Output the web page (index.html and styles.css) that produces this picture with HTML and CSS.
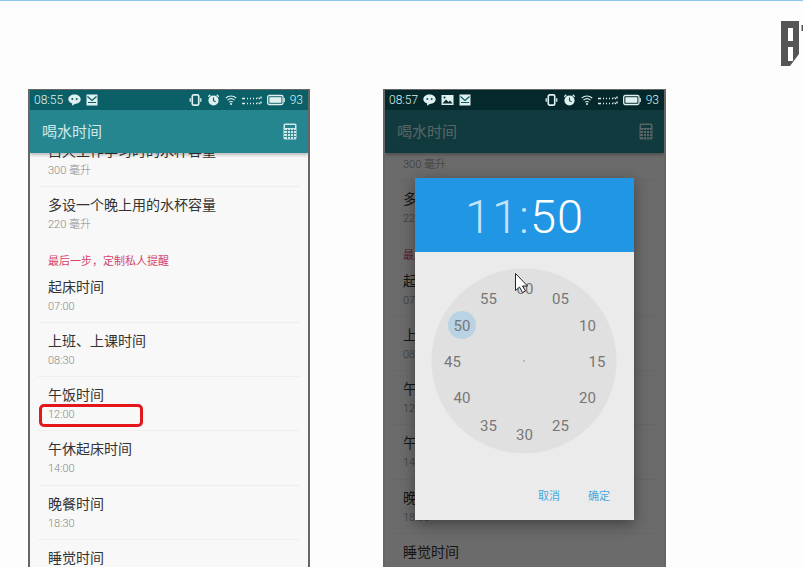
FILE: index.html
```html
<!DOCTYPE html>
<html lang="en">
<head>
    <meta charset="UTF-8">
    <meta name="viewport" content="width=device-width, initial-scale=1.0">
    <title>喝水时间</title>
    <link rel="stylesheet" href="styles.css">
</head>
<body>
    <svg class="defs" width="0" height="0">
        <symbol id="i-chat" viewBox="0 0 13 12"><path d="M6.5 0.5C10 .5 12.7 2.6 12.7 5.3S10 10 6.8 10L4 11.7 4.2 9.5C1.800 8.700.3 7.200.3 5.300.3 2.600 3 .5 6.500.5z" fill="currentColor"/><circle cx="4.300" cy="5" r="1" fill="#0a5a60"/><circle cx="8.700" cy="5" r="1" fill="#0a5a60"/></symbol>
        <symbol id="i-mail" viewBox="0 0 12 12"><rect x=".5" y=".5" width="11" height="11" fill="currentColor"/><path d="M1.500 2.500L6 6.500 10.500 2.500M2 8.500H10" fill="none" stroke="#0a5a60" stroke-width="1.200"/></symbol>
        <symbol id="i-image" viewBox="0 0 13 12"><rect x=".5" y="1" width="12" height="10" fill="currentColor"/><path d="M1.500 9.500L5 5.500 7.500 8 9 6.500 11.500 9.500z" fill="#04282b"/><circle cx="3.500" cy="3.500" r="1" fill="#04282b"/></symbol>
        <symbol id="i-vibrate" viewBox="0 0 13 13"><rect x="3" y="1" width="7" height="11" rx="1.500" fill="none" stroke="currentColor" stroke-width="1.800"/><path d="M.8 4.500V8.500M12.200 4.500V8.500" stroke="currentColor" stroke-width="1.400"/></symbol>
        <symbol id="i-alarm" viewBox="0 0 13 13"><circle cx="6.500" cy="7" r="5.500" fill="currentColor"/><path d="M6.500 3.800V7.300L8.800 8.500" fill="none" stroke="#0a5a60" stroke-width="1.200"/><path d="M.8 3L3 .8M12.200 3L10 .8" stroke="currentColor" stroke-width="1.300"/></symbol>
        <symbol id="i-wifi" viewBox="0 0 12 11"><path d="M.8 3.500C3.800.8 8.200.8 11.200 3.500M2.500 5.600C4.500 3.900 7.500 3.900 9.500 5.600M4.200 7.600C5.300 6.800 6.700 6.800 7.800 7.600" fill="none" stroke="currentColor" stroke-width="1.100"/><circle cx="6" cy="9.500" r="1" fill="currentColor"/></symbol>
        <symbol id="i-signal" viewBox="0 0 20 9"><path d="M0 3H3M0 8H3M5 3H6M5 8H6M8 3H9M8 8H9M11 3H12M11 8H12M14 3H15M14 8H15M17 3H18M17 8H18M19 1V3M19 6V8M16 2V3M16 7V8" stroke="currentColor" stroke-width="1.400" fill="none"/></symbol>
        <symbol id="i-battery" viewBox="0 0 18 11"><rect x=".7" y="1" width="15.300" height="9" rx="1.500" fill="none" stroke="currentColor" stroke-width="1.300"/><rect x="2.400" y="2.700" width="12" height="5.600" fill="currentColor"/><rect x="16.500" y="3.500" width="1.300" height="4" fill="currentColor"/></symbol>
        <symbol id="i-calc" viewBox="0 0 14 17"><rect x=".5" y=".5" width="13" height="16" rx="1.500" fill="currentColor"/><rect x="2" y="2" width="10" height="3" fill="#268690"/><path d="M1 7.500H13M1 10.500H13M1 13.500H13M4.500 6V16M7.500 6V16M10.500 6V16" stroke="#268690" stroke-width=".9" fill="none"/></symbol>
    </svg>

    <svg class="logo" viewBox="0 0 22 45" width="22" height="45">
        <path d="M0 0H18V33L9 45H0z" fill="#555"/>
        <rect x="7" y="7" width="5" height="13" fill="#fff"/>
        <rect x="7" y="26" width="5" height="14" fill="#fff"/>
        <rect x="20.500" y="4" width="1.500" height="6" fill="#555"/>
    </svg>

    <main class="slide">
        <!-- left phone: settings list -->
        <section class="phone">
            <div class="status">
                <div class="status-group">
                    <span class="clock-time">08:55</span>
                    <svg class="ic ic-13"><use href="#i-chat"/></svg>
                    <svg class="ic ic-12"><use href="#i-mail"/></svg>
                </div>
                <div class="status-group">
                    <svg class="ic ic-13"><use href="#i-vibrate"/></svg>
                    <svg class="ic ic-13"><use href="#i-alarm"/></svg>
                    <svg class="ic ic-12"><use href="#i-wifi"/></svg>
                    <svg class="ic ic-20"><use href="#i-signal"/></svg>
                    <svg class="ic ic-18"><use href="#i-battery"/></svg>
                    <span class="clock-time">93</span>
                </div>
            </div>
            <header class="appbar">
                <span class="app-title">喝水时间</span>
                <svg class="calc"><use href="#i-calc"/></svg>
            </header>
            <div class="list">
                <div class="row"><h3>白天工作学习时的水杯容量</h3><p>300 毫升</p></div>
                <div class="row row-last"><h3>多设一个晚上用的水杯容量</h3><p>220 毫升</p></div>
                <div class="section-label">最后一步，定制私人提醒</div>
                <div class="row"><h3>起床时间</h3><p>07:00</p></div>
                <div class="row"><h3>上班、上课时间</h3><p>08:30</p></div>
                <div class="row"><h3>午饭时间</h3><p>12:00</p><span class="highlight"></span></div>
                <div class="row"><h3>午休起床时间</h3><p>14:00</p></div>
                <div class="row"><h3>晚餐时间</h3><p>18:30</p></div>
                <div class="row"><h3>睡觉时间</h3><p>22:00</p></div>
            </div>
        </section>

        <!-- right phone: minute picker dialog -->
        <section class="phone phone-dim">
            <div class="status">
                <div class="status-group">
                    <span class="clock-time">08:57</span>
                    <svg class="ic ic-13"><use href="#i-chat"/></svg>
                    <svg class="ic ic-13"><use href="#i-image"/></svg>
                    <svg class="ic ic-12"><use href="#i-mail"/></svg>
                </div>
                <div class="status-group">
                    <svg class="ic ic-13"><use href="#i-vibrate"/></svg>
                    <svg class="ic ic-13"><use href="#i-alarm"/></svg>
                    <svg class="ic ic-12"><use href="#i-wifi"/></svg>
                    <svg class="ic ic-20"><use href="#i-signal"/></svg>
                    <svg class="ic ic-18"><use href="#i-battery"/></svg>
                    <span class="clock-time">93</span>
                </div>
            </div>
            <header class="appbar">
                <span class="app-title">喝水时间</span>
                <svg class="calc"><use href="#i-calc"/></svg>
            </header>
            <div class="list">
                <div class="row"><h3>白天工作学习时的水杯容量</h3><p>300 毫升</p></div>
                <div class="row row-last"><h3>多设一个晚上用的水杯容量</h3><p>220 毫升</p></div>
                <div class="section-label">最后一步，定制私人提醒</div>
                <div class="row"><h3>起床时间</h3><p>07:00</p></div>
                <div class="row"><h3>上班、上课时间</h3><p>08:30</p></div>
                <div class="row"><h3>午饭时间</h3><p>12:00</p></div>
                <div class="row"><h3>午休起床时间</h3><p>14:00</p></div>
                <div class="row"><h3>晚餐时间</h3><p>18:30</p></div>
                <div class="row"><h3>睡觉时间</h3><p>22:00</p></div>
            </div>
            <div class="scrim"></div>
            <div class="dialog">
                <div class="dialog-head"><span class="dim-digits">11:</span>50</div>
                <div class="dialog-body">
                    <svg class="dial" viewBox="0 0 219 222" width="219" height="222">
                        <circle cx="109" cy="109" r="92.500" fill="#e0e0e0"/>
                        <circle cx="47" cy="73" r="14" fill="#b9d3e4"/>
                        <circle cx="109" cy="109" r=".8" fill="#888"/>
                        <g class="dial-nums">
                            <text x="110" y="36.500">00</text>
                            <text x="145.500" y="46.500">05</text>
                            <text x="172.500" y="73.500">10</text>
                            <text x="182" y="109.500">15</text>
                            <text x="172.500" y="145.500">20</text>
                            <text x="145.500" y="173.500">25</text>
                            <text x="109.500" y="182.500">30</text>
                            <text x="73.500" y="173.500">35</text>
                            <text x="47" y="145.500">40</text>
                            <text x="37.500" y="109.500">45</text>
                            <text x="47" y="73.500">50</text>
                            <text x="73.500" y="46.500">55</text>
                        </g>
                        <path d="M100.500 21.500V38.500L104.500 35 107.500 40.500 110.500 39 107.500 34H112.500z" fill="#fff" stroke="#222" stroke-width="1"/>
                    </svg>
                    <div class="dialog-actions">
                        <span>取消</span>
                        <span>确定</span>
                    </div>
                </div>
            </div>
        </section>
    </main>
</body>
</html>
```

FILE: styles.css
```css
body {
    margin: 0;
    height: 567px;
    overflow: hidden;
    position: relative;
    background-color: #fdfdfd;
    border-top: 1px solid #8ec6ee;
    box-sizing: border-box;
    font-family: Roboto, "Noto Sans CJK SC", sans-serif;
}

.defs {
    position: absolute;
}

.logo {
    position: absolute;
    top: 20px;
    right: 0;
}

.slide {
    display: flex;
    gap: 73px;
    padding: 88px 0 0 28px;
}

.phone {
    position: relative;
    width: 282px;
    height: 480px;
    box-sizing: border-box;
    border: 2px solid #666;
    border-bottom: none;
    border-top-width: 1px;
    display: flex;
    flex-direction: column;
    overflow: hidden;
    background-color: #f8f8f8;
    flex: none;
}

.phone-dim {
    width: 283px;
}

/* status bar */
.status {
    position: relative;
    z-index: 3;
    height: 20px;
    flex: none;
    padding: 0 5px 0 4px;
    display: flex;
    justify-content: space-between;
    align-items: center;
    background-color: #0b6068;
    color: #dff0f0;
}

.phone-dim .status {
    background-color: #04282b;
}

.status-group {
    display: flex;
    align-items: center;
    gap: 5px;
}

.clock-time {
    font-size: 12px;
    font-weight: 300;
}

.ic {
    display: block;
    height: 12px;
}

.ic-12 { width: 12px; }
.ic-13 { width: 13px; }
.ic-18 { width: 18px; }
.ic-20 { width: 20px; }

/* app bar */
.appbar {
    position: relative;
    z-index: 1;
    height: 43px;
    flex: none;
    padding: 0 11px 0 12px;
    display: flex;
    justify-content: space-between;
    align-items: center;
    background-color: #268690;
    color: #cfe8ea;
    font-size: 15px;
    box-shadow: 0 2px 3px rgba(0, 0, 0, 0.25);
}

.app-title {
    margin-bottom: 3px;
}

.calc {
    width: 14px;
    height: 17px;
}

/* list */
.list {
    margin-top: -20px;
}

.phone-dim .list {
    margin-top: -26px;
}

.row {
    position: relative;
    height: 54.1px;
    box-sizing: border-box;
    margin: 0 8px;
    padding: 10px 0 0 10px;
    border-bottom: 1px solid #eeeeee;
}

.row-last {
    border-bottom: none;
}

.row h3 {
    margin: 0;
    font-size: 14px;
    line-height: 17px;
    font-weight: 400;
    color: #333;
}

.row p {
    margin: 3px 0 0;
    font-size: 11px;
    line-height: 16px;
    font-weight: 300;
    color: #888;
}

.section-label {
    height: 28px;
    box-sizing: border-box;
    padding: 13px 0 0 18px;
    font-size: 11px;
    line-height: 15px;
    color: #d4456a;
}

.highlight {
    position: absolute;
    left: 1px;
    top: 27px;
    width: 104px;
    height: 23px;
    box-sizing: border-box;
    border: 3px solid #e3161b;
    border-radius: 5px;
}

/* dialog */
.scrim {
    position: absolute;
    inset: 0;
    z-index: 2;
    background-color: rgba(0, 0, 0, 0.57);
}

.dialog {
    position: absolute;
    z-index: 4;
    left: 30px;
    top: 88px;
    width: 219px;
    height: 342px;
    box-shadow: 0 4px 14px rgba(0, 0, 0, 0.4);
    display: flex;
    flex-direction: column;
}

.dialog-head {
    height: 74px;
    box-sizing: border-box;
    padding-top: 3px;
    flex: none;
    display: flex;
    justify-content: center;
    align-items: center;
    background-color: #2196e5;
    color: #fff;
    font-size: 47px;
    font-weight: 300;
    letter-spacing: 1px;
}

.dim-digits {
    color: #c4e2f8;
}

.dialog-body {
    flex: 1;
    background-color: #ebebeb;
}

.dial {
    display: block;
}

.dial-nums text {
    font-size: 15px;
    fill: #777;
    text-anchor: middle;
    dominant-baseline: central;
}

.dialog-actions {
    display: flex;
    justify-content: flex-end;
    gap: 28px;
    padding: 15px 24px 0 0;
    font-size: 11px;
    line-height: 16px;
    color: #4aa8df;
}
```
